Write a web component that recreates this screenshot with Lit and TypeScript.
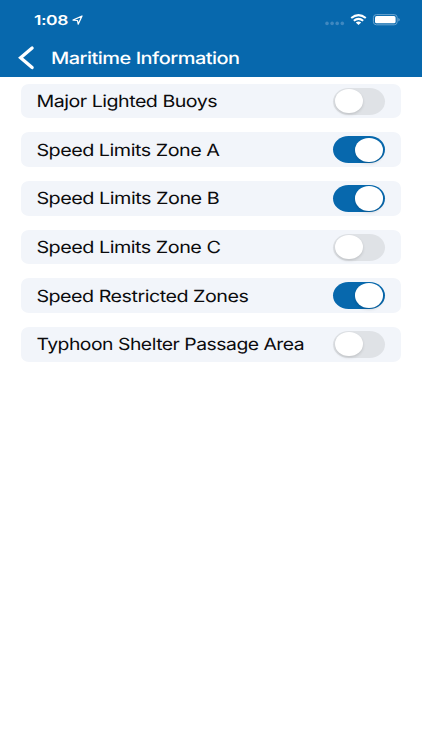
import { LitElement, html, css } from "lit";
import { customElement, property, state } from "lit/decorators.js";
import { classMap } from "lit/directives/class-map.js";

interface Layer {
  name: string;
  width: number;
  on: boolean;
}

/** One line of text, set to an exact advance width. */
@customElement("wide-text")
class WideText extends LitElement {
  @property() text = "";
  @property({ type: Number }) width = 100;
  @property({ type: Number }) inset = 0;

  static styles = css`
    :host {
      display: block;
      height: 24px;
    }
    svg {
      display: block;
      overflow: visible;
    }
    text {
      fill: currentColor;
      letter-spacing: -0.025em;
      text-rendering: geometricPrecision;
    }
  `;

  render() {
    return html`<svg width=${this.width} height="24">
      <text x=${this.inset} y="18.3" textLength=${this.width} lengthAdjust="spacingAndGlyphs">${this.text}</text>
    </svg>`;
  }
}

@customElement("toggle-switch")
class ToggleSwitch extends LitElement {
  @property({ type: Boolean }) on = false;

  static styles = css`
    :host {
      display: block;
    }
    .track {
      box-sizing: border-box;
      display: flex;
      align-items: center;
      width: 52px;
      height: 27px;
      padding: 0 2px;
      border-radius: 15.5px / 13.5px;
      background: #dfe2e6;
    }
    .track.on {
      justify-content: flex-end;
      background: #0768ad;
    }
    .knob {
      width: 28px;
      height: 24.4px;
      border-radius: 50%;
      background: #fff;
      box-shadow: 0 1.5px 3px rgba(0, 0, 0, 0.14);
    }
  `;

  render() {
    return html`<div class=${classMap({ track: true, on: this.on })}><div class="knob"></div></div>`;
  }
}

@customElement("app-root")
class AppRoot extends LitElement {
  @state() private layers: Layer[] = [
    { name: "Major Lighted Buoys", width: 180.8, on: false },
    { name: "Speed Limits Zone A", width: 183, on: true },
    { name: "Speed Limits Zone B", width: 182.8, on: true },
    { name: "Speed Limits Zone C", width: 184, on: false },
    { name: "Speed Restricted Zones", width: 212, on: true },
    { name: "Typhoon Shelter Passage Area", width: 267.8, on: false },
  ];

  static styles = css`
    :host {
      display: block;
      height: 750px;
      background: #fff;
      font-family: Inter, "Liberation Sans", sans-serif;
      overflow: hidden;
    }
    header {
      box-sizing: border-box;
      height: 76.6px;
      background: #0768ad;
      color: #fff;
    }
    .status {
      display: flex;
      height: 40px;
      justify-content: space-between;
    }
    .clock {
      display: flex;
      padding: 7px 0 0 34px;
      font-size: 13.6px;
      font-weight: 600;
    }
    .arrow {
      margin: 6.5px 0 0 3px;
    }
    .bar {
      display: flex;
      height: 36px;
      align-items: flex-start;
    }
    .back {
      margin: 5px 0 0 17px;
    }
    .title {
      margin: 6px 0 0 15.6px;
      font-size: 16.8px;
      font-weight: 500;
    }
    svg {
      display: block;
      flex: none;
    }
    main {
      display: flex;
      flex-direction: column;
      gap: 14.05px;
      padding: 7.2px 21px 0;
    }
    .row {
      box-sizing: border-box;
      display: flex;
      align-items: center;
      justify-content: space-between;
      height: 34.6px;
      padding: 0 16px 0 15px;
      border-radius: 8px / 7px;
      background: #f2f5fa;
      color: #0b0b0d;
      font-size: 16.8px;
    }
  `;

  private toggle(index: number) {
    this.layers = this.layers.map((l, i) => (i === index ? { ...l, on: !l.on } : l));
  }

  render() {
    return html`
      <header>
        <div class="status">
          <div class="clock">
            <wide-text text="1:08" .width=${34}></wide-text>
            <svg class="arrow" width="13" height="13" viewBox="0 0 13 13">
              <path d="M2 6.1 L11 2 L7.2 10.2 L6.5 6.5 Z" fill="none" stroke="#fff" stroke-width="1.25" stroke-linejoin="round" />
            </svg>
          </div>
          <svg width="102" height="40" viewBox="320 0 102 40">
            <g fill="#3f88c0">
              <circle cx="327" cy="23.4" r="1.8" />
              <circle cx="332.1" cy="23.4" r="1.8" />
              <circle cx="337.2" cy="23.4" r="1.8" />
              <circle cx="342.3" cy="23.4" r="1.8" />
            </g>
            <g fill="none" stroke="#fff" stroke-width="2">
              <path d="M351.2 18.1 Q358.5 12.1 365.8 18.1" />
              <path d="M353.8 20.7 Q358.5 17.1 363.2 20.7" />
            </g>
            <path d="M355.8 22.5 Q358.5 20.6 361.2 22.5 L358.5 25 Z" fill="#fff" />
            <rect x="373.4" y="14.6" width="23.8" height="10.2" rx="3" fill="none" stroke="#69a4d0" stroke-width="1" />
            <rect x="375" y="16.1" width="20.6" height="7.2" rx="1.6" fill="#fff" />
            <path d="M398.3 18 Q399.8 18.5 399.8 19.7 Q399.8 20.9 398.3 21.4 Z" fill="#69a4d0" />
          </svg>
        </div>
        <div class="bar">
          <svg class="back" width="18" height="26" viewBox="17 45 18 26">
            <path d="M32.1 48 L20.6 57.8 L32.1 67.6" fill="none" stroke="#fff" stroke-width="3.3" stroke-linecap="round" stroke-linejoin="miter" />
          </svg>
          <wide-text class="title" text="Maritime Information" .width=${188.6}></wide-text>
        </div>
      </header>
      <main>
        ${this.layers.map(
          (l, i) => html`<div class="row">
            <wide-text .text=${l.name} .width=${l.width} .inset=${0.4}></wide-text>
            <toggle-switch .on=${l.on} @click=${() => this.toggle(i)}></toggle-switch>
          </div>`
        )}
      </main>
    `;
  }
}
